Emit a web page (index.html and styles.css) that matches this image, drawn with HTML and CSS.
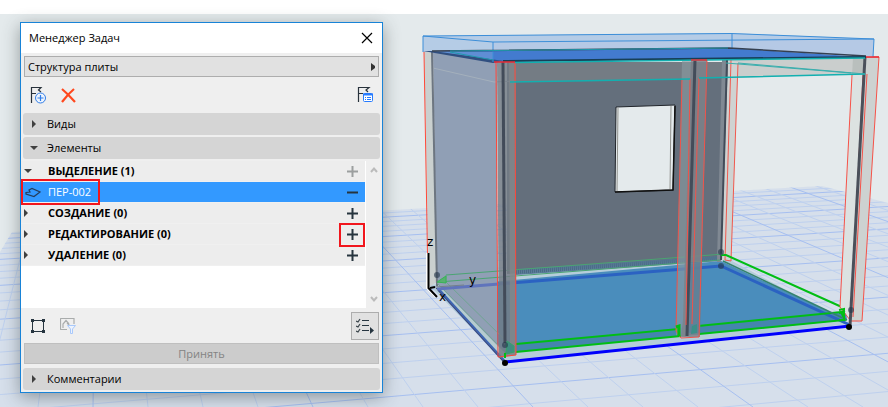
FILE: index.html
```html
<!DOCTYPE html>
<html lang="ru">
<head>
<meta charset="utf-8">
<title>Менеджер Задач</title>
<link rel="stylesheet" href="styles.css">
</head>
<body>
<main class="viewport">
  <svg class="scene" viewBox="0 0 888 407" preserveAspectRatio="xMinYMin slice" aria-hidden="true">
    <defs>
      <clipPath id="ground-clip"><path d="M0 252L12 232L427 208L822 186L888 203V407H0Z"/></clipPath>
    </defs>
    <path d="M0 14H888V407H0Z" fill="#e4eaec"/>
    <path d="M0 252L12 232L427 208L822 186L888 203V407H0Z" fill="#d6dfeb"/>
    <g id="grid" clip-path="url(#ground-clip)"></g>

    <!-- floor slab -->
    <path d="M429 285L721 255L850 324L505 362Z" fill="#b5cdda"/>
    <path d="M437 287L721 261L847 320L505 353Z" fill="#4a8dbc"/>
    <path d="M516 344L846 312L847 320L505 353Z" fill="#4585ae"/>
    <path d="M437 289L721 266L850 325" fill="none" stroke="#2b62c2" stroke-width="3"/>

    <!-- rear wall and window opening -->
    <path d="M507 62H728L721 260L507 274Z" fill="#646f7c"/>
    <path d="M516 62H728V78L516 82Z" fill="#747c84"/>
    <path d="M516 269L721 256V261L516 275Z" fill="#5b7c99"/>
    <path d="M516 272L721 258" stroke="#496b85" stroke-width="4" stroke-dasharray="1 1"/>
    <path d="M616 107L675 105L673 190L615 192Z" fill="#e4eaec" stroke="#20242a"/>
    <path d="M618 108L617 192M671 106L670 190" stroke="#92938f"/>
    <path d="M675 106L673 190L615 192" fill="none" stroke="#111" stroke-width="1.5"/>

    <!-- side wall -->
    <path d="M424 52H433L437 282L429 287Z" fill="#cad0cf"/>
    <path d="M433 52L497 62V355L437 288Z" fill="#909fb5"/>
    <path d="M433 68L494 82L515 81" fill="none" stroke="#a4b0bc"/>
    <path d="M432 52L437 286" stroke="#6d7681" stroke-width="2"/>
    <path d="M424 52L428 284" stroke="#ff4939"/>
    <path d="M437 287L504 356" stroke="#b6ccd0" stroke-width="5"/>
    <path d="M439 290L505 362" stroke="#3d65b3" stroke-width="3"/>
    <path d="M436 288L503 361" stroke="#454a70"/>
    <path d="M437 283L505 352M446 275L446 282L506 341" fill="none" stroke="#6fa592"/>

    <!-- upper right beam -->
    <path d="M728 60L866 57L865 74L728 78Z" fill="#cacecd"/>
    <path d="M853 57H866L865 74L852 76Z" fill="#b9bfbd"/>

    <!-- rear right post -->
    <path d="M728 60L738 62L731 260L721 260Z" fill="#cfd3d2"/>
    <path d="M722 60H728L721 262H717Z" fill="#808993"/>
    <path d="M727 60L721 260" stroke="#424c59" stroke-width="2"/>
    <path d="M731 60L725 260L731 261L738 63" fill="none" stroke="#f0594e"/>

    <!-- base profile outlines -->
    <path d="M516 344L678 329V335L681 336M681 336L505 353M698 326L841 312L845 320L699 334M721 255H726L844 308" fill="none" stroke="#00be14" stroke-width="2"/>
    <path d="M446 275L724 254M438 282L720 260" fill="none" stroke="#4aa472"/>
    <path d="M437 282L446 276V283Z" fill="#57b16f" stroke="#37b455"/>
    <path d="M723 261L847 320" stroke="#34836e" stroke-width="1.5"/>
    <path d="M505 362L850 326" stroke="#0000fc" stroke-width="3"/>
    <path d="M437 289L499 284" stroke="#6074bc" stroke-width="3"/>

    <!-- front left post -->
    <path d="M497 62H516V355L499 358Z" fill="#737c86" fill-opacity=".84"/>
    <path d="M503 62H505V345H504Z" fill="#8e9496"/>
    <path d="M509 62H516V355H510Z" fill="#858a8c" fill-opacity=".65"/>
    <path d="M503 61L505 343" stroke="#424b59" stroke-width="3"/>
    <path d="M496 62L498 357L516 355L515 62" fill="none" stroke="#ff4638"/>
    <path d="M507 341L514 346V352L506 354Z" fill="#3f8d82" stroke="#36a269"/>
    <path d="M505 353V358" stroke="#00be14" stroke-width="2"/>

    <!-- middle post -->
    <path d="M682 61H691L686 337L676 335Z" fill="#899a9f" fill-opacity=".65"/>
    <path d="M691 61H707L700 337H681L683 320Z" fill="#7c838a" fill-opacity=".85"/>
    <path d="M689 262H702L700 333H688Z" fill="#4e7f9f" fill-opacity=".55"/>
    <path d="M695 60L687 336" stroke="#434c59" stroke-width="3"/>
    <path d="M682 79L676 331L681 338L699 337L707 60L691 59M690 79L686 325M699 78L692 324" fill="none" stroke="#f1534a"/>
    <path d="M676 327L679 326V336" fill="none" stroke="#00be14" stroke-width="3"/>
    <path d="M692 326L697 324V333L691 334Z" fill="#3b8f89"/>

    <!-- front right post -->
    <path d="M852 75L864 74L851 320L840 307Z" fill="#dce2e1"/>
    <path d="M866 57H879L862 320L850 322Z" fill="#cdd2d1"/>
    <path d="M852 75L840 307L850 320M863 75L851 318M866 57H879L862 321L850 321M867 74L853 317" fill="none" stroke="#f65248"/>
    <path d="M865 57L850 326" stroke="#4a505a" stroke-width="3"/>
    <path d="M839 310L844 309V320H839M839 313L845 311" fill="none" stroke="#00be14" stroke-width="2"/>

    <!-- roof slab -->
    <path d="M423 36L493 42L874 39L873 57L729 48L432 51L423 52Z" fill="#b5c9e5"/>
    <path d="M423 36L731 33L874 39L493 42Z" fill="#b5cce6"/>
    <path d="M423 51H432L493 62V42L423 36Z" fill="#b5cce6"/>
    <path d="M432 51L729 48L866 57L503 62Z" fill="#437bcf"/>
    <path d="M493 52L493 62L450 55L432 51Z" fill="#5f8ed4"/>
    <path d="M423 51L433 51L504 61L493 63Z" fill="#304f80"/>
    <path d="M423 36L731 33.500L874 39L493 42ZM423 36V52M493 42V62M732 33V48M874 39L873 57" fill="none" stroke="#3c8ed8"/>
    <path d="M432 51L729 48L866 56" fill="none" stroke="#354050" stroke-width="1.500"/>
    <path d="M450 52L493 60M450 51L728 48" stroke="#1f99ad"/>
    <path d="M503 61L866 57" stroke="#173f57" stroke-width="2"/>
    <path d="M515 62.500L865 58M510 82L690 79M699 78L865 74" fill="none" stroke="#12b0b0" stroke-width="1.500"/>
    <path d="M726 63L851 73M738 63L865 74" stroke="#3aaead"/>
    <path d="M494 62H515M691 60H707M866 57H879" stroke="#ec2b36" stroke-width="1.500"/>

    <!-- nodes -->
    <g fill="#25374b" fill-opacity=".62"><circle cx="437" cy="275" r="3"/><circle cx="505" cy="345" r="3"/><circle cx="721" cy="252" r="3"/><circle cx="721" cy="266" r="3"/><circle cx="851" cy="310" r="3"/></g>
    <circle cx="505" cy="363" r="3"/><circle cx="849" cy="327" r="3"/>

    <!-- axes -->
    <path d="M427 253V288L436 297" fill="none" stroke="#fff" stroke-width="2"/>
    <path d="M428.500 253V288L437 297" fill="none" stroke="#000" stroke-width="2"/>
    <path d="M430 288L435 287" stroke="#000" stroke-width="2"/>
    <path d="M435 287L464 285" stroke="#73808b"/>
    <g class="axis"><text x="427" y="246">z</text><text x="469" y="284">y</text><text x="439" y="301">x</text></g>
  </svg>

  <section class="dialog" aria-labelledby="dialog-title">
    <header class="titlebar">
      <h1 id="dialog-title">Менеджер Задач</h1>
      <button class="plain" aria-label="Закрыть"><svg width="12" height="12"><path d="M1 1L11 11M11 1L1 11" fill="none" stroke="#000" stroke-width="1.200"/></svg></button>
    </header>

    <div class="picker">
      <select aria-label="Задача"><option>Структура плиты</option></select>
      <svg width="5" height="8"><path d="M0 0L4 3V5L0 8Z" fill="#333"/></svg>
    </div>

    <div class="toolbar">
      <button class="plain" aria-label="Новая задача"><svg width="18" height="18"><path d="M1.500 17V1.500H11L8.500 4L11 6M1.500 7.500H6" fill="none" stroke="#28323c" stroke-width="1.200"/><circle cx="10.500" cy="12" r="5" fill="#eef4fd" stroke="#2f7de9"/><path d="M7.500 12H13.500M10.500 9V15" stroke="#2f7de9" stroke-width="1.200"/></svg></button>
      <button class="plain" aria-label="Удалить задачу"><svg width="15" height="15"><path d="M1 1Q7 6 14 14M13 1Q7 6 1 14" fill="none" stroke="#ff481e" stroke-width="2.200"/></svg></button>
      <button class="plain end" aria-label="Параметры задачи"><svg width="18" height="18"><path d="M1.500 16V1.500H12L9 4L11 6M1.500 7.500H6" fill="none" stroke="#28323c" stroke-width="1.200"/><rect x="6.500" y="7.500" width="9" height="8" rx="1" fill="#fff" stroke="#267bff"/><path d="M6 8.500H16" stroke="#267bff" stroke-width="2"/><path d="M8 11.500H9M10 11.500H14M8 13.500H9M10 13.500H14" stroke="#267bff"/></svg></button>
    </div>

    <button class="section"><svg width="8" height="8"><path d="M2 0L6 4L2 8Z"/></svg>Виды</button>
    <button class="section" aria-expanded="true"><svg width="8" height="8"><path d="M0 2H8L4 6Z"/></svg>Элементы</button>

    <div class="browser">
      <ul class="list">
        <li class="row"><svg class="twist" width="8" height="8"><path d="M0 2H8L4 6Z"/></svg><strong>ВЫДЕЛЕНИЕ (1)</strong><button class="plain" disabled aria-label="Добавить в выделение"><svg width="11" height="11"><path d="M0 5.500H11M5.500 0V11"/></svg></button></li>
        <li class="row selected"><svg class="slab" width="16" height="11"><path d="M1 5.500L5 5L4 3L7 1.500L15 5L9 9.500L1 7Z" fill="none" stroke="#253e5c" stroke-width="1.200"/></svg><span>ПЕР-002</span><button class="plain" aria-label="Убрать"><svg width="11" height="11"><path d="M0 5.500H11"/></svg></button><i class="mark mark-item"></i></li>
        <li class="row"><svg class="twist" width="8" height="8"><path d="M0 0L4 4L0 8Z"/></svg><strong>СОЗДАНИЕ (0)</strong><button class="plain" aria-label="Добавить в создание"><svg width="11" height="11"><path d="M0 5.500H11M5.500 0V11"/></svg></button></li>
        <li class="row"><svg class="twist" width="8" height="8"><path d="M0 0L4 4L0 8Z"/></svg><strong>РЕДАКТИРОВАНИЕ (0)</strong><button class="plain" aria-label="Добавить в редактирование"><svg width="11" height="11"><path d="M0 5.500H11M5.500 0V11"/></svg></button><i class="mark mark-add"></i></li>
        <li class="row"><svg class="twist" width="8" height="8"><path d="M0 0L4 4L0 8Z"/></svg><strong>УДАЛЕНИЕ (0)</strong><button class="plain" aria-label="Добавить в удаление"><svg width="11" height="11"><path d="M0 5.500H11M5.500 0V11"/></svg></button></li>
      </ul>
      <div class="scrollbar" aria-hidden="true">
        <svg width="8" height="8"><path d="M1 6L4 2.500L7 6" fill="none" stroke="#bbb" stroke-width="2"/></svg>
        <svg width="8" height="8"><path d="M1 2L4 5.500L7 2" fill="none" stroke="#bbb" stroke-width="2"/></svg>
      </div>
    </div>

    <div class="actions">
      <button class="plain" aria-label="Выбрать элементы"><svg width="14" height="14"><rect x="1.500" y="1.500" width="11" height="11" fill="none" stroke="#263540"/><path d="M0 0H3V3H0ZM11 0H14V3H11ZM0 11H3V14H0ZM11 11H14V14H11Z" fill="#263540"/></svg></button>
      <button class="plain" disabled aria-label="Показать в проекте"><svg width="16" height="16"><path d="M7 11.500H1Q.5 11.500 .5 11V1Q.5 .5 1 .5H14V6M3 10V6L6 2.500L9 6M7 5L10 8" fill="none" stroke="#a9acac" stroke-width="1.200"/><path d="M7.500 7.500H15.500L12.500 11V15.500H10.500V11Z" fill="#edf3fd" stroke="#a9c9fb"/></svg></button>
      <button class="checks" aria-label="Список задач"><svg width="18" height="16"><path d="M0 3L2 4L4 1M0 8L2 9L4 6M0 13L2 14L4 11" fill="none" stroke="#3e484e" stroke-width="1.300"/><path d="M6 2.500H13M6 7.500H13M6 12.500H13" stroke="#263540"/><path d="M14 9L18 12.500L14 16Z" fill="#263540"/></svg></button>
    </div>
    <button class="accept" disabled>Принять</button>
    <button class="section"><svg width="8" height="8"><path d="M2 0L6 4L2 8Z"/></svg>Комментарии</button>
  </section>
</main>
<script src="scene.js"></script>
</body>
</html>
```
FILE: styles.css
```css
* { box-sizing: border-box; }

body {
  margin: 0;
  background: #fff;
  color: #000;
  font: 11px/16px "Open Sans", "Noto Sans", sans-serif;
}

button, select { font: inherit; color: inherit; }
svg { display: block; flex: none; }

.viewport {
  position: relative;
  min-height: 100vh;
  padding: 22px 20px 14px;
  overflow: hidden;
}

.scene {
  position: absolute;
  inset: 0;
  width: 100%;
  height: 100%;
}

.axis { font: 12px "DejaVu Sans", sans-serif; }

.dialog {
  position: relative;
  display: flex;
  flex-direction: column;
  max-width: 363px;
  border: 1px solid #1883d7;
  background: #efefef;
  box-shadow: 0 4px 16px rgba(50, 60, 60, .45);
}

.titlebar {
  display: flex;
  align-items: center;
  justify-content: space-between;
  height: 30px;
  padding: 0 9px 0 8px;
  background: #fff;
}

h1 { margin: 0; font-size: 11px; font-weight: 400; }

.plain {
  display: block;
  padding: 0;
  border: 0;
  background: none;
}

.picker {
  display: grid;
  align-items: center;
  margin: 3px 3px 0;
}

.picker > * { grid-area: 1 / 1; }
.picker svg { justify-self: end; margin-right: 3px; }

.picker select {
  width: 100%;
  height: 21px;
  padding: 0 3px;
  appearance: none;
  border: 1px solid #adadad;
  border-radius: 0;
  background: #e1e1e1;
}

.toolbar {
  display: flex;
  align-items: center;
  gap: 13px;
  height: 36px;
  padding: 0 7px 0 9px;
}

.end { margin-left: auto; }

.section {
  display: flex;
  align-items: center;
  gap: 9px;
  height: 22px;
  margin: 0 2px 2px;
  padding: 0 7px;
  border: 0;
  border-radius: 3px;
  background: #d5d5d5;
  text-align: left;
}

.section svg, .twist { fill: #404040; }

.browser { display: flex; height: 147px; }

.list {
  flex: 1;
  margin: 0;
  padding: 0;
  border-right: 1px solid #fff;
  background: #fff;
  list-style: none;
}

.row {
  position: relative;
  display: grid;
  grid-template-columns: 27px 1fr auto;
  align-items: center;
  height: 21px;
  padding-right: 7px;
  border-bottom: 1px solid #f0f0f0;
  background: #ededed;
}

.row .twist { margin-left: 3px; }
.row .slab { margin-left: 4px; }
.row button svg { fill: none; stroke: #26343e; stroke-width: 2px; }
.row button:disabled svg { stroke: #9c9f9f; }
.selected { background: #3399ff; color: #fff; }

.mark {
  position: absolute;
  border: 2px solid #f1161d;
  pointer-events: none;
}

.mark-item { top: -3px; left: 0; width: 79px; height: 26px; z-index: 1; }
.mark-add { top: -1px; right: 0; width: 26px; height: 24px; z-index: 1; }

.scrollbar {
  display: flex;
  flex-direction: column;
  align-items: center;
  justify-content: space-between;
  width: 16px;
  padding: 5px 0;
}

.actions {
  display: flex;
  align-items: center;
  gap: 15px;
  height: 35px;
  padding: 0 3px 0 10px;
}

.checks {
  display: grid;
  place-items: center;
  width: 28px;
  height: 28px;
  margin-left: auto;
  padding: 0;
  border: 1px solid #adadad;
  background: #e1e1e1;
}

.accept {
  height: 21px;
  margin: 0 3px 4px;
  padding: 0;
  border: 1px solid #bfbfbf;
  background: #ccc;
}

.accept:disabled { color: #838383; }
```
FILE: scene.js
```js
// Perspective ground grid: two line families, every fourth line is stronger.
const grid = document.getElementById("grid");

function addLine(x1, y1, x2, y2, major) {
  const line = document.createElementNS("http://www.w3.org/2000/svg", "line");
  line.setAttribute("x1", x1);
  line.setAttribute("y1", y1);
  line.setAttribute("x2", x2);
  line.setAttribute("y2", y2);
  line.setAttribute("stroke", major ? "#a6bff0" : "#bed0ee");
  grid.append(line);
}

for (let n = -8; n <= 22; n++) {
  const y = 50 + 1 / (0.00288 + 0.000155 * n);
  const slope = -0.055 - 0.000171 * (y - 210);
  addLine(0, y - slope * 383, 888, y + slope * 505, n % 4 === 0);
}

for (let k = -14; k <= 44; k++) {
  addLine(99, -57, 533 + 55 * k, 407, k % 4 === 0);
}
```
